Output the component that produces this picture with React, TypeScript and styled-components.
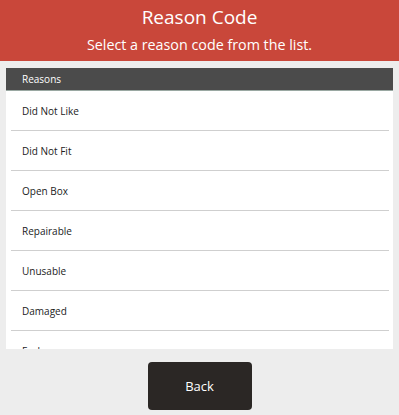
import React from "react";
import styled, { createGlobalStyle } from "styled-components";

const GlobalStyle = createGlobalStyle`
  html, body {
    margin: 0;
    padding: 0;
    background: #ededed;
    font-family: "Open Sans", "Noto Sans", sans-serif;
  }
`;

const Page = styled.div`
  width: 399px;
  height: 415px;
  display: flex;
  flex-direction: column;
  background: #ededed;
  overflow: hidden;
`;

const Header = styled.header`
  height: 61px;
  background: #c9473a;
  color: #fff;
  display: flex;
  flex-direction: column;
  align-items: center;
  box-sizing: border-box;
  padding-top: 4px;
`;

const Title = styled.h1`
  margin: 0;
  font-size: 19px;
  font-weight: 400;
  line-height: 26px;
`;

const Subtitle = styled.p`
  margin: 3px 0 0;
  font-size: 14.3px;
  line-height: 24px;
`;

const Panel = styled.section`
  margin: 7px 6px 0;
  display: flex;
  flex-direction: column;
  background: #fff;
  height: 281px;
  overflow: hidden;
`;

const PanelHeader = styled.div`
  height: 22px;
  background: #4b4b4b;
  border-bottom: 1px solid #9aa8a2;
  color: #fff;
  font-size: 10px;
  line-height: 22px;
  padding-left: 16px;
  flex-shrink: 0;
`;

const List = styled.ul`
  list-style: none;
  margin: 0;
  padding: 0 4px 0 5px;
`;

const Row = styled.li`
  height: 39px;
  border-bottom: 1px solid #cfcfcf;
  font-size: 10px;
  color: #222;
  display: flex;
  align-items: center;
  padding-left: 11px;
`;

const Footer = styled.div`
  display: flex;
  justify-content: center;
  padding-top: 13px;
`;

const BackButton = styled.button`
  width: 104px;
  height: 48px;
  background: #2b2725;
  color: #fff;
  border: none;
  border-radius: 4px;
  font-family: inherit;
  font-size: 13px;
`;

const reasons = [
  "Did Not Like",
  "Did Not Fit",
  "Open Box",
  "Repairable",
  "Unusable",
  "Damaged",
  "Exchange",
];

export default function App() {
  return (
    <Page>
      <GlobalStyle />
      <Header>
        <Title>Reason Code</Title>
        <Subtitle>Select a reason code from the list.</Subtitle>
      </Header>
      <Panel>
        <PanelHeader>Reasons</PanelHeader>
        <List>
          {reasons.map((r) => (
            <Row key={r}>{r}</Row>
          ))}
        </List>
      </Panel>
      <Footer>
        <BackButton>Back</BackButton>
      </Footer>
    </Page>
  );
}
